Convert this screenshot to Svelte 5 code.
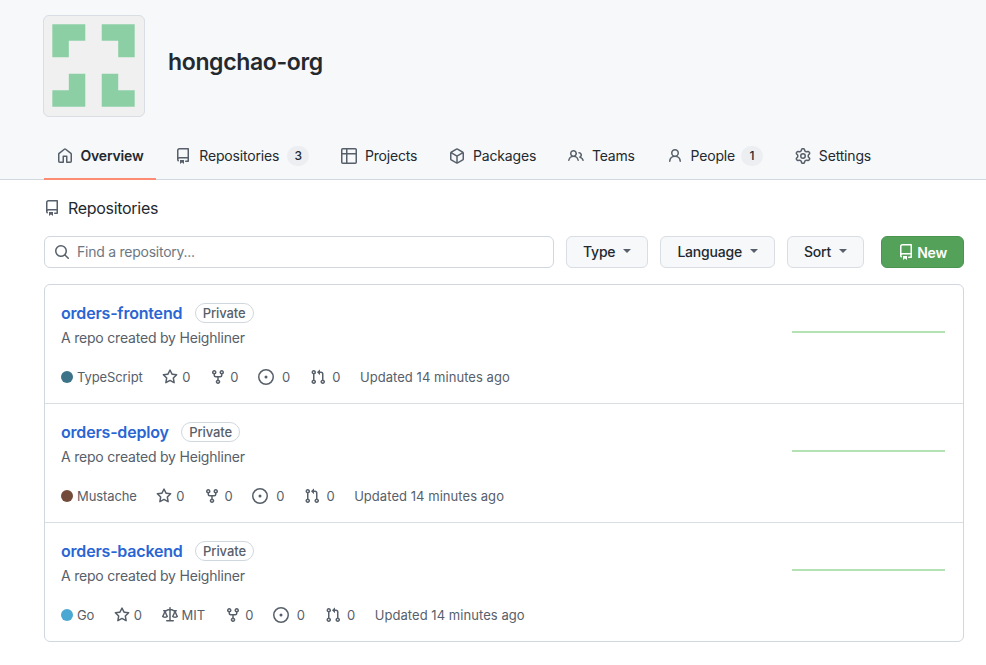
<script>
    const icons = {
        home: "M6.906.664a1.749 1.749 0 0 1 2.187 0l5.25 4.2c.415.332.657.835.657 1.367v7.019A1.75 1.75 0 0 1 13.25 15h-3.5a.75.75 0 0 1-.75-.75V9H7v5.25a.75.75 0 0 1-.75.75h-3.5A1.75 1.75 0 0 1 1 13.25V6.23c0-.531.242-1.034.657-1.366l5.25-4.2Zm1.25 1.171a.25.25 0 0 0-.312 0l-5.25 4.2a.25.25 0 0 0-.094.196v7.019c0 .138.112.25.25.25H5.5V8.25a.75.75 0 0 1 .75-.75h3.5a.75.75 0 0 1 .75.75v5.25h2.75a.25.25 0 0 0 .25-.25V6.23a.25.25 0 0 0-.094-.195Z",
        repo: "M2 2.5A2.5 2.5 0 0 1 4.5 0h8.75a.75.75 0 0 1 .75.75v12.5a.75.75 0 0 1-.75.75h-2.5a.75.75 0 0 1 0-1.5h1.75v-2h-8a1 1 0 0 0-.714 1.7.75.75 0 1 1-1.072 1.05A2.495 2.495 0 0 1 2 11.5Zm10.5-1h-8a1 1 0 0 0-1 1v6.708A2.486 2.486 0 0 1 4.5 9h8ZM5 12.25a.25.25 0 0 1 .25-.25h3.5a.25.25 0 0 1 .25.25v3.25a.25.25 0 0 1-.4.2l-1.45-1.087a.249.249 0 0 0-.3 0L5.4 15.7a.25.25 0 0 1-.4-.2Z",
        table: "M0 1.75C0 .784.784 0 1.75 0h12.5C15.216 0 16 .784 16 1.75v12.5A1.75 1.75 0 0 1 14.25 16H1.75A1.75 1.75 0 0 1 0 14.25ZM6.5 6.5v8h7.75a.25.25 0 0 0 .25-.25V6.5Zm8-1.5V1.75a.25.25 0 0 0-.25-.25H6.5V5Zm-13 1.5v7.75c0 .138.112.25.25.25H5v-8ZM5 5V1.5H1.75a.25.25 0 0 0-.25.25V5Z",
        pkg: "m8.878.392 5.25 3.045c.54.314.872.89.872 1.514v6.098a1.75 1.75 0 0 1-.872 1.514l-5.25 3.045a1.75 1.75 0 0 1-1.756 0l-5.25-3.045A1.75 1.75 0 0 1 1 11.049V4.951c0-.624.332-1.201.872-1.514L7.122.392a1.75 1.75 0 0 1 1.756 0ZM7.875 1.69l-4.63 2.685L8 7.133l4.755-2.758-4.63-2.685a.248.248 0 0 0-.25 0ZM2.5 5.677v5.372c0 .09.047.171.125.216l4.625 2.683V8.432Zm6.25 8.271 4.625-2.683a.25.25 0 0 0 .125-.216V5.677L8.75 8.432Z",
        people: "M2 5.5a3.5 3.5 0 1 1 5.898 2.549 5.508 5.508 0 0 1 3.034 4.084.75.75 0 1 1-1.482.235 4 4 0 0 0-7.9 0 .75.75 0 0 1-1.482-.236A5.507 5.507 0 0 1 3.102 8.05 3.493 3.493 0 0 1 2 5.5ZM11 4a3.001 3.001 0 0 1 2.22 5.018 5.01 5.01 0 0 1 2.56 3.012.749.749 0 0 1-.885.954.752.752 0 0 1-.549-.514 3.507 3.507 0 0 0-2.522-2.372.75.75 0 0 1-.574-.73v-.352a.75.75 0 0 1 .416-.672A1.5 1.5 0 0 0 11 5.5.75.75 0 0 1 11 4Zm-5.5-.5a2 2 0 1 0-.001 3.999A2 2 0 0 0 5.5 3.5Z",
        person: "M10.561 8.073a6.005 6.005 0 0 1 3.432 5.142.75.75 0 1 1-1.498.07 4.5 4.5 0 0 0-8.99 0 .75.75 0 0 1-1.498-.07 6.004 6.004 0 0 1 3.431-5.142 3.999 3.999 0 1 1 5.123 0ZM10.5 5a2.5 2.5 0 1 0-5 0 2.5 2.5 0 0 0 5 0Z",
        gear: "M8 0a8.2 8.2 0 0 1 .701.031C9.444.095 9.99.645 10.16 1.29l.288 1.107c.018.066.079.158.212.224.231.114.454.243.668.386.123.082.233.09.299.071l1.103-.303c.644-.176 1.392.021 1.82.63.27.385.506.792.704 1.218.315.675.111 1.422-.364 1.891l-.814.806c-.049.048-.098.147-.088.294.016.257.016.515 0 .772-.01.147.038.246.088.294l.814.806c.475.469.679 1.216.364 1.891a7.977 7.977 0 0 1-.704 1.217c-.428.61-1.176.807-1.82.63l-1.102-.302c-.067-.019-.177-.011-.3.071a5.909 5.909 0 0 1-.668.386c-.133.066-.194.158-.211.224l-.29 1.106c-.168.646-.715 1.196-1.458 1.26a8.006 8.006 0 0 1-1.402 0c-.743-.064-1.289-.614-1.458-1.26l-.289-1.106c-.018-.066-.079-.158-.212-.224a5.738 5.738 0 0 1-.668-.386c-.123-.082-.233-.09-.299-.071l-1.103.303c-.644.176-1.392-.021-1.82-.63a8.12 8.12 0 0 1-.704-1.218c-.315-.675-.111-1.422.363-1.891l.815-.806c.05-.048.098-.147.088-.294a6.214 6.214 0 0 1 0-.772c.01-.147-.038-.246-.088-.294l-.815-.806C.635 6.045.431 5.298.746 4.623a7.92 7.92 0 0 1 .704-1.217c.428-.61 1.176-.807 1.82-.63l1.102.302c.067.019.177.011.3-.071.214-.143.437-.272.668-.386.133-.066.194-.158.211-.224l.29-1.106C6.009.645 6.556.095 7.299.03 7.53.01 7.764 0 8 0Zm-.571 1.525c-.036.003-.108.036-.137.146l-.289 1.105c-.147.561-.549.967-.998 1.189-.173.086-.34.183-.5.29-.417.278-.97.423-1.529.27l-1.103-.303c-.109-.03-.175.016-.195.045-.22.312-.412.644-.573.99-.014.031-.021.11.059.19l.815.806c.411.406.562.957.53 1.456a4.709 4.709 0 0 0 0 .582c.032.499-.119 1.05-.53 1.456l-.815.806c-.081.08-.073.159-.059.19.162.346.353.677.573.989.02.03.085.076.195.046l1.102-.303c.56-.153 1.113-.008 1.53.27.161.107.328.204.501.29.447.222.85.629.997 1.189l.289 1.105c.029.109.101.143.137.146a6.6 6.6 0 0 0 1.142 0c.036-.003.108-.036.137-.146l.289-1.105c.147-.561.549-.967.998-1.189.173-.086.34-.183.5-.29.417-.278.97-.423 1.529-.27l1.103.303c.109.029.175-.016.195-.045.22-.313.411-.644.573-.99.014-.031.021-.11-.059-.19l-.815-.806c-.411-.406-.562-.957-.53-1.456a4.709 4.709 0 0 0 0-.582c-.032-.499.119-1.05.53-1.456l.815-.806c.081-.08.073-.159.059-.19a6.464 6.464 0 0 0-.573-.989c-.02-.03-.085-.076-.195-.046l-1.102.303c-.56.153-1.113.008-1.53-.27a4.44 4.44 0 0 0-.501-.29c-.447-.222-.85-.629-.997-1.189l-.289-1.105c-.029-.11-.101-.143-.137-.146a6.6 6.6 0 0 0-1.142 0ZM11 8a3 3 0 1 1-6 0 3 3 0 0 1 6 0ZM9.5 8a1.5 1.5 0 1 0-3.001.001A1.5 1.5 0 0 0 9.5 8Z",
        search: "M10.68 11.74a6 6 0 0 1-7.922-8.982 6 6 0 0 1 8.982 7.922l3.04 3.04a.749.749 0 0 1-.326 1.275.749.749 0 0 1-.734-.215ZM11.5 7a4.499 4.499 0 1 0-8.997 0A4.499 4.499 0 0 0 11.5 7Z",
        star: "M8 .25a.75.75 0 0 1 .673.418l1.882 3.815 4.21.612a.75.75 0 0 1 .416 1.279l-3.046 2.97.719 4.192a.751.751 0 0 1-1.088.791L8 12.347l-3.766 1.98a.75.75 0 0 1-1.088-.79l.72-4.194L.818 6.374a.75.75 0 0 1 .416-1.28l4.21-.611L7.327.668A.75.75 0 0 1 8 .25Zm0 2.445L6.615 5.5a.75.75 0 0 1-.564.41l-3.097.45 2.24 2.184a.75.75 0 0 1 .216.664l-.528 3.084 2.769-1.456a.75.75 0 0 1 .698 0l2.77 1.456-.53-3.084a.75.75 0 0 1 .216-.664l2.24-2.183-3.096-.45a.75.75 0 0 1-.564-.41L8 2.694Z",
        fork: "M5 5.372v.878c0 .414.336.75.75.75h4.5a.75.75 0 0 0 .75-.75v-.878a2.25 2.25 0 1 1 1.5 0v.878a2.25 2.25 0 0 1-2.25 2.25h-1.5v2.128a2.251 2.251 0 1 1-1.5 0V8.5h-1.5A2.25 2.25 0 0 1 3.5 6.25v-.878a2.25 2.25 0 1 1 1.5 0ZM5 3.25a.75.75 0 1 0-1.5 0 .75.75 0 0 0 1.5 0Zm6.75.75a.75.75 0 1 0 0-1.5.75.75 0 0 0 0 1.5Zm-3 8.75a.75.75 0 1 0-1.5 0 .75.75 0 0 0 1.5 0Z",
        issue: "M8 9.5a1.5 1.5 0 1 0 0-3 1.5 1.5 0 0 0 0 3ZM8 0a8 8 0 1 1 0 16A8 8 0 0 1 8 0ZM1.5 8a6.5 6.5 0 1 0 13 0 6.5 6.5 0 0 0-13 0Z",
        pull: "M1.5 3.25a2.25 2.25 0 1 1 3 2.122v5.256a2.251 2.251 0 1 1-1.5 0V5.372A2.25 2.25 0 0 1 1.5 3.25Zm5.677-.177L9.573.677A.25.25 0 0 1 10 .854V2.5h1A2.5 2.5 0 0 1 13.5 5v5.628a2.251 2.251 0 1 1-1.5 0V5a1 1 0 0 0-1-1h-1v1.646a.25.25 0 0 1-.427.177L7.177 3.427a.25.25 0 0 1 0-.354ZM3.75 2.5a.75.75 0 1 0 0 1.5.75.75 0 0 0 0-1.5Zm0 9.5a.75.75 0 1 0 0 1.5.75.75 0 0 0 0-1.5Zm8.25.75a.75.75 0 1 0 1.5 0 .75.75 0 0 0-1.5 0Z",
        law: "M8.75.75V2h.985c.304 0 .603.08.867.231l1.29.736c.038.022.08.033.124.033h2.234a.75.75 0 0 1 0 1.5h-.427l2.111 4.692a.75.75 0 0 1-.154.838l-.53-.53.529.531-.001.002-.002.002-.006.006-.006.005-.01.01-.045.04c-.21.176-.441.327-.686.45C14.556 10.78 13.88 11 13 11a4.498 4.498 0 0 1-2.023-.454 3.544 3.544 0 0 1-.686-.45l-.045-.04-.016-.015-.006-.006-.004-.004v-.001a.75.75 0 0 1-.154-.838L12.178 4.5h-.162c-.305 0-.604-.079-.868-.231l-1.29-.736a.245.245 0 0 0-.124-.033H8.75V13h2.5a.75.75 0 0 1 0 1.5h-6.5a.75.75 0 0 1 0-1.5h2.5V3.5h-.984a.245.245 0 0 0-.124.033l-1.289.737c-.265.15-.564.23-.869.23h-.162l2.112 4.692a.75.75 0 0 1-.154.838l-.53-.53.529.531-.001.002-.002.002-.006.006-.016.015-.045.04c-.21.176-.441.327-.686.45C4.556 10.78 3.88 11 3 11a4.498 4.498 0 0 1-2.023-.454 3.544 3.544 0 0 1-.686-.45l-.045-.04-.016-.015-.006-.006-.004-.004v-.001a.75.75 0 0 1-.154-.838L2.178 4.5H1.75a.75.75 0 0 1 0-1.5h2.234a.249.249 0 0 0 .125-.033l1.288-.737c.265-.15.564-.23.869-.23h.984V.75a.75.75 0 0 1 1.5 0Zm2.945 8.477c.285.135.718.273 1.305.273s1.02-.138 1.305-.273L13 6.327Zm-10 0c.285.135.718.273 1.305.273s1.02-.138 1.305-.273L3 6.327Z"
    }

    const tabs = [
        { label: "Overview", icon: "home", active: true },
        { label: "Repositories", icon: "repo", count: 3 },
        { label: "Projects", icon: "table" },
        { label: "Packages", icon: "pkg" },
        { label: "Teams", icon: "people" },
        { label: "People", icon: "person", count: 1, tight: true },
        { label: "Settings", icon: "gear" }
    ]

    const filters = ["Type", "Language", "Sort"]

    const repos = [
        { name: "orders-frontend", lang: "TypeScript", color: "#3d7389" },
        { name: "orders-deploy", lang: "Mustache", color: "#724b3b" },
        { name: "orders-backend", lang: "Go", color: "#4aa8d3", license: "MIT" }
    ]
</script>

{#snippet icon(name)}
    <svg class="icon" viewBox="0 0 16 16" width="16" height="16" fill="currentColor" aria-hidden="true">
        <path d={icons[name]} />
    </svg>
{/snippet}

<header>
    <div class="org">
        <div class="avatar">
            <svg viewBox="0 0 102 102" width="100" height="100">
                <path fill="#8ccfa5" d="M8.5 8.5h33.6v16.8H25.3v16.8H8.5ZM58.9 8.5h33.6v33.6H75.7V25.3H58.9ZM25.3 58.9h16.8v33.6H8.5V75.7h16.8ZM58.9 58.9h16.8v16.8h16.8v16.8H58.9Z" />
            </svg>
        </div>
        <h1>hongchao-org</h1>
    </div>

    <nav>
        {#each tabs as tab}
            <a class="tab" class:active={tab.active} href="#top">
                {@render icon(tab.icon)}
                <span>{tab.label}</span>
                {#if tab.count}
                    <span class="count" class:tight={tab.tight}>{tab.count}</span>
                {/if}
            </a>
        {/each}
    </nav>
</header>

<main>
    <h2>{@render icon("repo")} Repositories</h2>

    <div class="toolbar">
        <div class="search">
            {@render icon("search")}
            <span>Find a repository...</span>
        </div>
        {#each filters as filter}
            <button class="filter">{filter}<i class="caret"></i></button>
        {/each}
        <button class="new">{@render icon("repo")} New</button>
    </div>

    <ul>
        {#each repos as repo}
            <li>
                <div class="info">
                    <div class="title">
                        <a href="#top">{repo.name}</a>
                        <span class="badge">Private</span>
                    </div>
                    <p>A repo created by Heighliner</p>
                    <div class="meta">
                        <span class="lang"><i class="dot" style="background: {repo.color}"></i>{repo.lang}</span>
                        <span class="stat">{@render icon("star")} 0</span>
                        {#if repo.license}
                            <span class="stat">{@render icon("law")} {repo.license}</span>
                        {/if}
                        <span class="stat fork">{@render icon("fork")} 0</span>
                        <span class="stat issue">{@render icon("issue")} 0</span>
                        <span class="stat pull">{@render icon("pull")} 0</span>
                        <span class="updated">Updated 14 minutes ago</span>
                    </div>
                </div>
                <div class="spark"></div>
            </li>
        {/each}
    </ul>
</main>

<style>
    :global(body) {
        background: #fff;
        color: #24292f;
        font-family: Inter, "Liberation Sans", sans-serif;
        font-size: 14px;
    }

    header {
        height: 180px;
        box-sizing: border-box;
        background: #f6f8fa;
        border-bottom: 1px solid #d0d7de;
        padding-left: 43px;
        padding-top: 15px;
    }

    .org {
        display: flex;
        align-items: center;
        gap: 23px;
    }

    .avatar {
        width: 100px;
        height: 100px;
        background: #f0f0f0;
        border: 1px solid #d8dee4;
        border-radius: 6px;
    }

    .avatar svg {
        display: block;
    }

    h1 {
        margin: 0 0 8px;
        font-size: 23px;
        font-weight: 600;
        letter-spacing: -0.35px;
    }

    nav {
        display: flex;
        gap: 6.8px;
        margin-top: 16px;
        margin-left: 1px;
    }

    .tab {
        display: flex;
        align-items: center;
        gap: 8px;
        height: 47px;
        box-sizing: border-box;
        padding: 0 12.5px;
        border-bottom: 2px solid transparent;
        color: #24292f;
        letter-spacing: -0.18px;
        text-decoration: none;
    }

    .tab .icon {
        color: #57606a;
    }

    .tab.active {
        border-bottom-color: #fd8c73;
        font-weight: 600;
    }

    .count {
        padding: 0 7px;
        min-width: 8px;
        line-height: 20px;
        border-radius: 11px;
        background: #eceef1;
        font-size: 12px;
        font-weight: 500;
        letter-spacing: 0;
        text-align: center;
    }

    .count.tight {
        margin-left: -2px;
    }

    main {
        padding: 0 22px 0 44px;
    }

    h2 {
        display: flex;
        align-items: center;
        gap: 8px;
        margin: 0;
        padding-top: 18px;
        height: 20px;
        font-size: 16px;
        font-weight: 400;
        letter-spacing: -0.3px;
    }

    h2 .icon {
        color: #57606a;
    }

    .toolbar {
        display: flex;
        margin-top: 18px;
        gap: 12px;
    }

    .search {
        flex: 1;
        display: flex;
        align-items: center;
        gap: 7px;
        height: 32px;
        box-sizing: border-box;
        padding: 0 0 1px 9px;
        border: 1px solid #d0d7de;
        border-radius: 6px;
        color: #6e7781;
        letter-spacing: -0.25px;
    }

    .search .icon {
        color: #57606a;
    }

    button {
        display: flex;
        align-items: center;
        height: 32px;
        box-sizing: border-box;
        border-radius: 6px;
        font: inherit;
        font-weight: 500;
        letter-spacing: -0.2px;
    }

    .filter {
        gap: 8px;
        padding: 0 16px 2px;
        background: #f6f8fa;
        border: 1px solid #d8dee4;
        color: #24292f;
    }

    .caret {
        border: 4px solid transparent;
        border-top-color: #57606a;
        border-bottom: 0;
    }

    .new {
        gap: 3px;
        margin-left: 5px;
        padding: 0 16px;
        background: #54a15a;
        border: 1px solid #4b9551;
        color: #fff;
        font-weight: 600;
    }

    ul {
        margin: 16px 0 0;
        padding: 0;
        list-style: none;
        border: 1px solid #d0d7de;
        border-radius: 6px;
    }

    li {
        display: flex;
        justify-content: space-between;
        height: 119px;
        box-sizing: border-box;
        padding: 16px;
        padding-right: 18px;
        border-top: 1px solid #d8dee4;
    }

    li:first-child {
        height: 118px;
        border-top: 0;
    }

    .title {
        display: flex;
        align-items: center;
        gap: 12.5px;
        height: 24px;
    }

    .title a {
        color: #2a65d4;
        font-size: 16px;
        font-weight: 600;
        letter-spacing: -0.2px;
        text-decoration: none;
    }

    .badge {
        padding: 0 7px;
        line-height: 18px;
        border: 1px solid #d0d7de;
        border-radius: 10px;
        color: #57606a;
        font-size: 13px;
        font-weight: 500;
        letter-spacing: -0.1px;
    }

    p {
        margin: 2px 0 0;
        color: #57606a;
        line-height: 21px;
        letter-spacing: -0.2px;
    }

    .meta {
        display: flex;
        align-items: center;
        gap: 19.5px;
        margin-top: 21px;
        color: #57606a;
        font-size: 13px;
    }

    .lang {
        display: flex;
        align-items: center;
        gap: 4px;
        letter-spacing: -0.1px;
    }

    .dot {
        width: 12px;
        height: 12px;
        border-radius: 50%;
    }

    .stat {
        display: flex;
        align-items: center;
        gap: 4px;
    }

    .fork {
        gap: 4.5px;
    }

    .issue {
        gap: 8px;
    }

    .pull {
        gap: 6.5px;
    }

    .updated {
        letter-spacing: 0.05px;
    }

    .spark {
        width: 153px;
        height: 2px;
        margin-top: 30px;
        background: #b4e2b5;
    }
</style>
